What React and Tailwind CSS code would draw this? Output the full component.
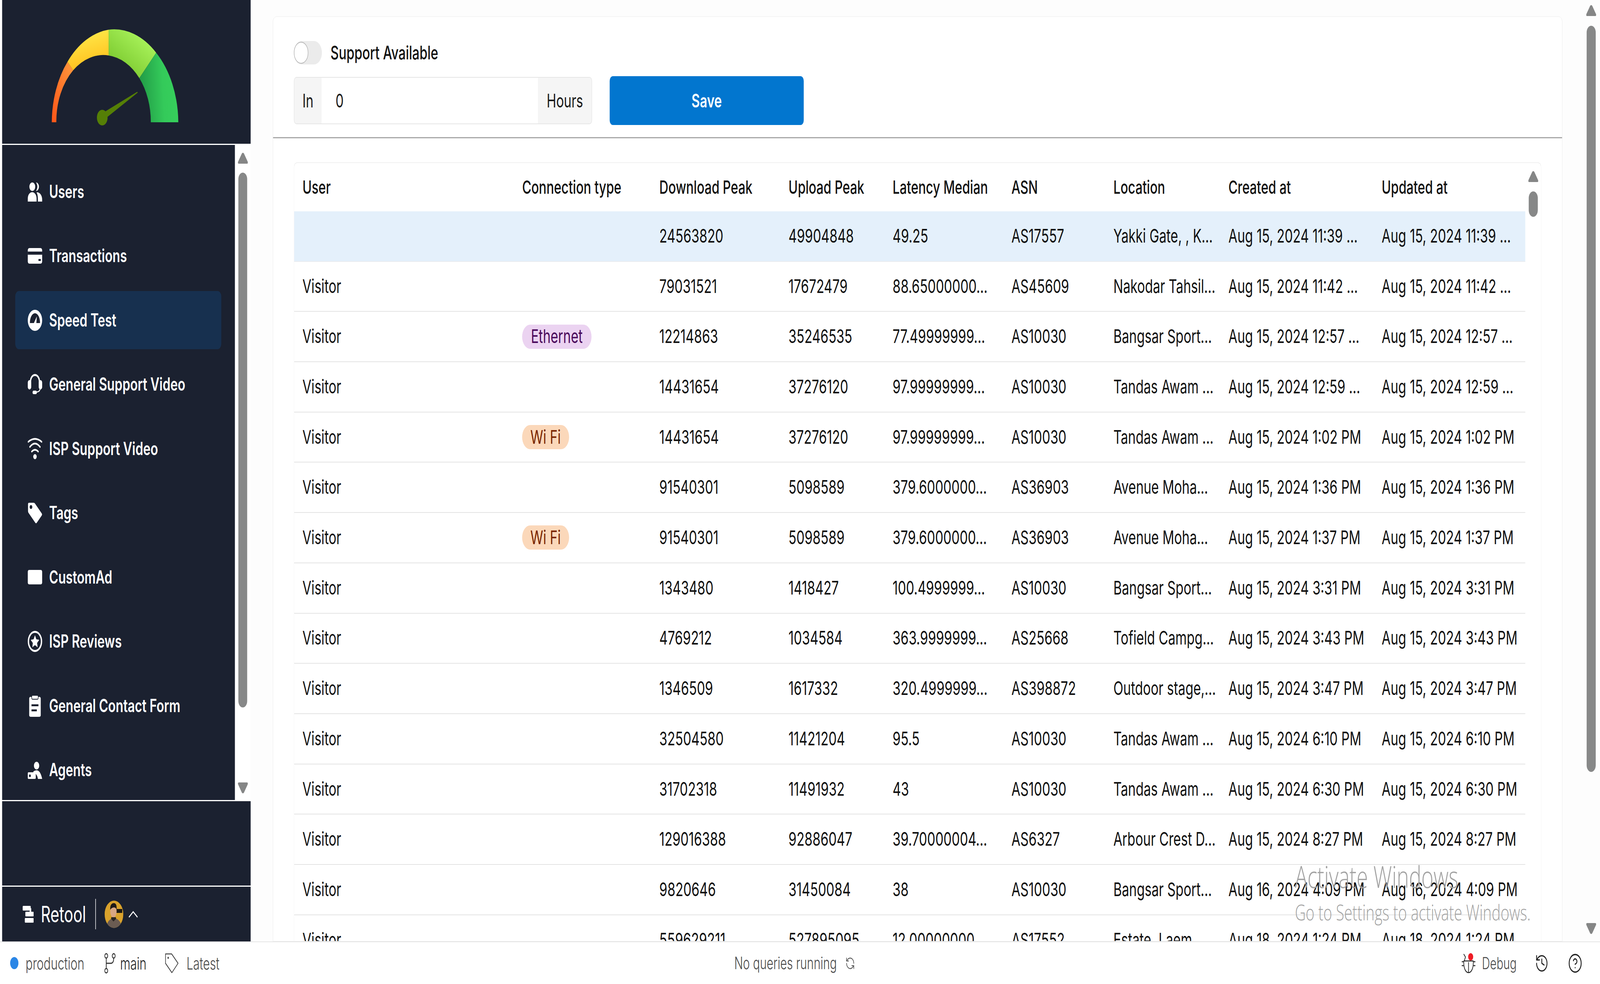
import React from "react";
import { History, CircleHelp, RefreshCcw } from "lucide-react";

const DARK = "#1b2130";

const UsersIcon = () => (
  <svg width="54" height="51" viewBox="0 0 54 51" fill="#fff">
    <circle cx="17" cy="13" r="11" />
    <path d="M0 51V44C0 33 8 27 16.500 27C25 27 33 33 33 44V51Z" />
    <path d="M31 2A11 11 0 0 1 31 24C34 20 36 17 36 13C36 9 34 5 31 2Z" />
    <path d="M36 27C46 28 54 36 54 46V51H38V44C38 37 36 31 33 28Z" />
  </svg>
);
const CardIcon = () => (
  <svg width="54" height="40" viewBox="0 0 54 40">
    <rect width="54" height="40" rx="6" fill="#fff" />
    <rect y="9" width="54" height="8" fill={DARK} />
    <rect x="40" y="28" width="9" height="5" rx="1" fill={DARK} />
  </svg>
);
const GaugeIcon = () => (
  <svg width="54" height="54" viewBox="0 0 54 54">
    <circle cx="27" cy="27" r="27" fill="#fff" />
    <path d="M8 34C8 19 17 9 27 9C37 9 46 19 46 34Z" fill={DARK} />
    <path d="M23 34L34 17L32 36Z" fill="#fff" />
  </svg>
);
const HeadsetIcon = () => (
  <svg width="54" height="54" viewBox="0 0 54 54">
    <path d="M10 22C10 10 18 3 27 3C36 3 44 10 44 22" fill="none" stroke="#fff" strokeWidth="5" />
    <rect x="0" y="16" width="13" height="24" rx="6.500" fill="#fff" />
    <rect x="41" y="16" width="13" height="24" rx="6.500" fill="#fff" />
    <path d="M46 38C46 44 38 47 26 47" fill="none" stroke="#fff" strokeWidth="3" />
    <rect x="18" y="43" width="16" height="9" rx="4.500" fill="#fff" />
  </svg>
);
const WifiIcon = () => (
  <svg width="54" height="55" viewBox="0 0 54 55" fill="none" stroke="#fff" strokeWidth="4.500" strokeLinecap="round">
    <path d="M2 10Q27 -5 52 10" />
    <path d="M8 23Q27 6 46 23" />
    <path d="M15 35Q27 26 39 35" />
    <circle cx="27" cy="48" r="6.500" fill="#fff" stroke="none" />
  </svg>
);
const TagIcon = () => (
  <svg width="54" height="54" viewBox="0 0 54 54">
    <path d="M5 1H22Q25 1 27 3L52 28Q55 31 52 34L34 52Q31 55 28 52L3 27Q1 25 1 22V5Q1 1 5 1Z" fill="#fff" />
    <circle cx="12" cy="12" r="5" fill={DARK} />
  </svg>
);
const AdIcon = () => (
  <svg width="54" height="37" viewBox="0 0 54 37">
    <rect width="54" height="37" rx="5" fill="#fff" />
  </svg>
);
const StarIcon = () => (
  <svg width="54" height="54" viewBox="0 0 54 54">
    <circle cx="27" cy="27" r="24.500" fill="none" stroke="#fff" strokeWidth="5" />
    <path d="M27 11L32 21.500L43 23L35 31L37 42L27 36.500L17 42L19 31L11 23L22 21.500Z" fill="#fff" />
  </svg>
);
const ClipIcon = () => (
  <svg width="44" height="56" viewBox="0 0 44 56">
    <rect y="5" width="44" height="51" rx="5" fill="#fff" />
    <rect x="10" y="1" width="24" height="10" rx="3" fill="#fff" stroke={DARK} strokeWidth="2" />
    <rect x="9" y="24" width="26" height="5" fill={DARK} />
    <rect x="9" y="37" width="20" height="5" fill={DARK} />
  </svg>
);
const AgentIcon = () => (
  <svg width="54" height="45" viewBox="0 0 54 45" fill="#fff">
    <circle cx="33" cy="11" r="10" />
    <path d="M20 27C24 24 29 23 33 23C43 23 50 31 54 45H38C37 38 32 31 20 27Z" />
    <rect x="0" y="28" width="30" height="17" rx="3" />
    <circle cx="8" cy="37" r="3.500" fill={DARK} />
  </svg>
);

const navItems = [
  ["Users", UsersIcon],
  ["Transactions", CardIcon],
  ["Speed Test", GaugeIcon],
  ["General Support Video", HeadsetIcon],
  ["ISP Support Video", WifiIcon],
  ["Tags", TagIcon],
  ["CustomAd", AdIcon],
  ["ISP Reviews", StarIcon],
  ["General Contact Form", ClipIcon],
  ["Agents", AgentIcon],
];

const Arrow = ({ down }) => (
  <svg width="38" height="30" viewBox="0 0 38 30" className={down ? "rotate-180" : ""}>
    <path d="M19 1Q21 1 23 3L37 24Q39 29 34 29H4Q-1 29 1 24L15 3Q17 1 19 1Z" fill="#858686" />
  </svg>
);

const Gauge = () => (
  <svg width="931" height="368" viewBox="8 0 931 368">
    <defs>
      <linearGradient id="go" x1="0" y1="1" x2="1" y2="0">
        <stop offset="0" stopColor="#ff5518" />
        <stop offset="1" stopColor="#ff9a3e" />
      </linearGradient>
      <linearGradient id="gy" x1="0.7" y1="1" x2="0.4" y2="0">
        <stop offset="0" stopColor="#ffbb18" />
        <stop offset="1" stopColor="#ffeb4c" />
      </linearGradient>
      <linearGradient id="gl" x1="0.2" y1="0.9" x2="0.8" y2="0.2">
        <stop offset="0" stopColor="#78c62c" />
        <stop offset="1" stopColor="#a8f25a" />
      </linearGradient>
      <linearGradient id="gd" x1="0" y1="0.5" x2="1" y2="0.4">
        <stop offset="0" stopColor="#219a46" />
        <stop offset="0.6" stopColor="#34ca5a" />
        <stop offset="1" stopColor="#37d05c" />
      </linearGradient>
    </defs>
    <path d="M194 313A237 238 0 0 1 253 158L274 180A177 171 0 0 0 211 313Z" fill="url(#go)" />
    <path d="M253 158A237 238 0 0 1 407 76L407 142A177 171 0 0 0 274 180Z" fill="url(#gy)" />
    <path d="M407 76A237 238 0 0 1 585 135L522 200A177 171 0 0 0 407 142Z" fill="url(#gl)" />
    <path d="M585 135A237 238 0 0 1 668 313H565A177 171 0 0 0 522 200Z" fill="url(#gd)" />
    <circle cx="383" cy="301" r="20" fill="#557f06" />
    <path d="M395 285L514 235L516 237L403 299Z" fill="#557f06" />
  </svg>
);

const RetoolLogo = () => (
  <svg width="41" height="43" viewBox="0 0 41 43" fill="#fff">
    <rect x="0" y="0" width="30" height="12" rx="2" />
    <rect x="10" y="15" width="31" height="12" rx="2" />
    <rect x="8" y="31" width="33" height="12" rx="2" />
    <rect x="26" y="6" width="6" height="10" />
  </svg>
);

const Avatar = () => (
  <svg width="70" height="71" viewBox="0 0 70 71">
    <defs>
      <clipPath id="av">
        <circle cx="35" cy="35.500" r="35" />
      </clipPath>
    </defs>
    <g clipPath="url(#av)">
      <rect width="70" height="71" fill="#d9a22c" />
      <rect x="42" y="22" width="24" height="10" fill="#1d1a14" />
      <path d="M6 71C8 54 20 46 35 46C50 46 62 54 64 71Z" fill="#6b5c52" />
      <ellipse cx="33" cy="28" rx="12" ry="16" fill="#d9a783" />
      <path d="M21 24C20 10 28 7 35 7C42 7 46 12 45 24C42 16 28 16 21 24Z" fill="#1f1a18" />
      <path d="M24 47L33 54L43 47L42 43H25Z" fill="#2a2522" />
    </g>
  </svg>
);

const BugIcon = () => (
  <div className="relative w-[51px] h-[51px]">
    <svg width="51" height="51" viewBox="0 0 51 51" fill="none" stroke="#222" strokeWidth="2.500" strokeLinecap="round">
      <path d="M8 20H43C45 38 36 50 25.500 50C15 50 6 38 8 20Z" />
      <path d="M25.500 24V50" />
      <path d="M8 3L14 10L10 19" />
      <path d="M1 22H6M1 32H6M45 22H50M45 32H50" />
    </svg>
    <div className="absolute right-[8px] top-0 w-[19px] h-[19px] rounded-full bg-[#ee1c25]" />
  </div>
);

const BranchIcon = () => (
  <svg width="42" height="52" viewBox="0 0 42 52" fill="none" stroke="#333" strokeWidth="2.800">
    <circle cx="7" cy="7" r="5.500" />
    <circle cx="7" cy="45" r="5.500" />
    <circle cx="35" cy="7" r="5.500" />
    <path d="M7 12.500V39.500" />
    <path d="M35 12.500C35 22 31 26 24 26H7" />
  </svg>
);

const LatestIcon = () => (
  <svg width="51" height="52" viewBox="0 0 51 52" fill="none" stroke="#444" strokeWidth="2.500" strokeLinejoin="round">
    <path d="M2 2H25L49 26L26 50L2 26Z" />
    <circle cx="12" cy="12" r="1.500" fill="#444" />
  </svg>
);

const rows = [
  ["", "", "24563820", "49904848", "49.25", "AS17557", "Yakki Gate, , K...", "Aug 15, 2024 11:39 ...", "Aug 15, 2024 11:39 ..."],
  ["Visitor", "", "79031521", "17672479", "88.65000000...", "AS45609", "Nakodar Tahsil...", "Aug 15, 2024 11:42 ...", "Aug 15, 2024 11:42 ..."],
  ["Visitor", "Ethernet", "12214863", "35246535", "77.49999999...", "AS10030", "Bangsar Sport...", "Aug 15, 2024 12:57 ...", "Aug 15, 2024 12:57 ..."],
  ["Visitor", "", "14431654", "37276120", "97.99999999...", "AS10030", "Tandas Awam ...", "Aug 15, 2024 12:59 ...", "Aug 15, 2024 12:59 ..."],
  ["Visitor", "Wi Fi", "14431654", "37276120", "97.99999999...", "AS10030", "Tandas Awam ...", "Aug 15, 2024 1:02 PM", "Aug 15, 2024 1:02 PM"],
  ["Visitor", "", "91540301", "5098589", "379.6000000...", "AS36903", "Avenue Moha...", "Aug 15, 2024 1:36 PM", "Aug 15, 2024 1:36 PM"],
  ["Visitor", "Wi Fi", "91540301", "5098589", "379.6000000...", "AS36903", "Avenue Moha...", "Aug 15, 2024 1:37 PM", "Aug 15, 2024 1:37 PM"],
  ["Visitor", "", "1343480", "1418427", "100.4999999...", "AS10030", "Bangsar Sport...", "Aug 15, 2024 3:31 PM", "Aug 15, 2024 3:31 PM"],
  ["Visitor", "", "4769212", "1034584", "363.9999999...", "AS25668", "Tofield Campg...", "Aug 15, 2024 3:43 PM", "Aug 15, 2024 3:43 PM"],
  ["Visitor", "", "1346509", "1617332", "320.4999999...", "AS398872", "Outdoor stage,...", "Aug 15, 2024 3:47 PM", "Aug 15, 2024 3:47 PM"],
  ["Visitor", "", "32504580", "11421204", "95.5", "AS10030", "Tandas Awam ...", "Aug 15, 2024 6:10 PM", "Aug 15, 2024 6:10 PM"],
  ["Visitor", "", "31702318", "11491932", "43", "AS10030", "Tandas Awam ...", "Aug 15, 2024 6:30 PM", "Aug 15, 2024 6:30 PM"],
  ["Visitor", "", "129016388", "92886047", "39.70000004...", "AS6327", "Arbour Crest D...", "Aug 15, 2024 8:27 PM", "Aug 15, 2024 8:27 PM"],
  ["Visitor", "", "9820646", "31450084", "38", "AS10030", "Bangsar Sport...", "Aug 16, 2024 4:09 PM", "Aug 16, 2024 4:09 PM"],
  ["Visitor", "", "559629211", "527895095", "12.00000000...", "AS17552", "Estate, Laem...", "Aug 18, 2024 1:24 PM", "Aug 18, 2024 1:24 PM"],
];

const headers = ["User", "Connection type", "Download Peak", "Upload Peak", "Latency Median", "ASN", "Location", "Created at", "Updated at"];
const gridCols = "grid grid-cols-[823px_514px_484px_390px_445px_382px_431px_574px_569px]";

const Pill = ({ text }) => (
  <span
    className={
      text === "Ethernet"
        ? "inline-flex items-center h-[62px] px-[33px] rounded-full bg-[#ebd3f1] text-[#4b0a5c]"
        : "inline-flex items-center h-[62px] px-[31px] rounded-full bg-[#fbd8ba] text-[#7a2600]"
    }
  >
    {text}
  </span>
);

export default function App() {
  // The window may be narrower than the design width: fit the 5994px design to it.
  const fit = window.innerWidth / 5994;
  return (
    <div className="w-screen h-screen overflow-hidden bg-[#fdfdfd]">
      <div
        className="w-[5994px] h-[2519px] flex flex-col overflow-hidden bg-[#fdfdfd] [font-family:Inter,sans-serif] relative origin-top-left"
        style={{ transform: `scaleX(${fit})` }}
      >
        <div className="h-[2410px] flex">
          {/* sidebar */}
          <aside className="ml-[8px] w-[931px] h-full flex flex-col shrink-0 bg-white">
            <div className="h-[368px] bg-[#1b2130]">
              <Gauge />
            </div>
            <div className="h-[1680px] pt-[3px] flex">
              <nav className="w-[872px] bg-[#1b2130] pt-[45px] pl-[49px] flex flex-col gap-[15.500px] overflow-hidden">
                {navItems.map(([label, Icon]) => (
                  <div
                    key={label}
                    className={
                      label === "Speed Test"
                        ? "w-[772px] h-[149px] shrink-0 rounded-[14px] bg-[#17304f] flex items-center pl-[47px] gap-[26px] text-white text-[46.500px] font-semibold"
                        : "w-[772px] h-[149px] shrink-0 rounded-[14px] flex items-center pl-[47px] gap-[26px] text-white text-[46.500px] font-semibold"
                    }
                  >
                    <span className="w-[54px] flex justify-center">
                      <Icon />
                    </span>
                    <span>{label}</span>
                  </div>
                ))}
              </nav>
              <div className="w-[59px] flex flex-col items-center pt-[19px] pb-[16px]">
                <Arrow />
                <div className="w-[33px] h-[1369px] mt-[22px] rounded-full bg-[#878888]" />
                <div className="mt-auto">
                  <Arrow down />
                </div>
              </div>
            </div>
            <div className="h-[3px] bg-white" />
            <div className="h-[216px] bg-[#1b2130]" />
            <div className="h-[3px] bg-white" />
            <div className="h-[140px] bg-[#1b2130] flex items-center pl-[77px] text-white">
              <RetoolLogo />
              <span className="ml-[27px] w-[169px] text-[57px] leading-none whitespace-nowrap">Retool</span>
              <div className="ml-[35px] w-[2px] h-[78px] bg-white" />
              <div className="ml-[33px]">
                <Avatar />
              </div>
              <svg width="36" height="19" viewBox="0 0 36 19" fill="none" stroke="#fff" strokeWidth="3" className="ml-[19px]">
                <path d="M2 17L18 3L34 17" />
              </svg>
            </div>
          </aside>

          {/* main */}
          <main className="flex-1 flex min-w-0">
            <div className="flex-1 pl-[83px] pt-[42px] min-w-0 overflow-hidden">
              <div className="w-[4831px] h-full bg-white border border-[#e9e9e9] rounded-t-[14px] overflow-hidden">
                <div className="h-[311px] pl-[78px] pt-[62px] border-b-[3px] border-[#a8a8a8]">
                  <div className="flex items-center h-[60px]">
                    <div className="w-[105px] h-[60px] rounded-full bg-[#ebebeb] flex items-center">
                      <div className="w-[54px] h-[56px] rounded-full bg-white border-2 border-[#b5b5b5]" />
                    </div>
                    <span className="ml-[32px] text-[48px] font-medium text-[#111]">Support Available</span>
                  </div>
                  <div className="flex items-center mt-[30px] h-[125px]">
                    <div className="w-[1117px] h-[121px] rounded-[10px] border-2 border-[#e6e6e6] flex overflow-hidden text-[48px] text-[#1a1a1a]">
                      <div className="w-[102px] bg-[#f5f5f5] flex items-center pl-[30px]">In</div>
                      <div className="flex-1 bg-white flex items-center pl-[52px]">0</div>
                      <div className="w-[201px] bg-[#f5f5f5] flex items-center pl-[33px]">Hours</div>
                    </div>
                    <button className="ml-[66px] w-[727px] h-[125px] rounded-[12px] bg-[#0276cf] text-white text-[48px] font-semibold">
                      Save
                    </button>
                  </div>
                </div>

                <div className="pl-[78px] pt-[62px]">
                  <div className="w-[4673px] h-[2000px] flex border-t border-x border-[#e4e4e4] rounded-t-[12px] overflow-hidden">
                    <div className="w-[4612px] shrink-0">
                      <div className={gridCols + " h-[124px] items-center text-[47px] font-medium text-[#111]"}>
                        {headers.map((h) => (
                          <div key={h} className="pl-[31px]">
                            {h}
                          </div>
                        ))}
                      </div>
                      {rows.map((row, i) => (
                        <div
                          key={i}
                          className={
                            gridCols +
                            (i === 0
                              ? " h-[128.700px] items-center text-[48.500px] text-[#111] bg-[#e4f0fb] border-b border-[#e4e4e4]"
                              : " h-[128.700px] items-center text-[48.500px] text-[#111] border-b-2 border-[#e4e4e4]")
                          }
                        >
                          {row.map((c, j) => (
                            <div key={j} className="pl-[31px] whitespace-nowrap overflow-hidden">
                              {j === 1 && c ? <Pill text={c} /> : c}
                            </div>
                          ))}
                        </div>
                      ))}
                    </div>
                    <div className="flex-1 flex flex-col items-center pt-[20px]">
                      <Arrow />
                      <div className="w-[34px] h-[65px] mt-[23px] rounded-full bg-[#878888]" />
                    </div>
                  </div>
                </div>
              </div>
            </div>
            <div className="w-[66px] shrink-0 flex flex-col items-center pt-[12px] pb-[18px]">
              <Arrow />
              <div className="w-[34px] h-[1910px] mt-[24px] rounded-full bg-[#878888]" />
              <div className="mt-auto">
                <Arrow down />
              </div>
            </div>
          </main>
        </div>

        {/* status bar */}
        <footer className="h-[109px] bg-white border-t-2 border-[#e6e6e6] flex items-center text-[44px] text-[#4a4a4a] font-light whitespace-nowrap">
          <div className="ml-[38px] w-[31px] h-[31px] rounded-full bg-[#2b86e6]" />
          <span className="ml-[27px]">production</span>
          <span className="ml-[75px]">
            <BranchIcon />
          </span>
          <span className="ml-[17px] text-[#222]">main</span>
          <span className="ml-[69px]">
            <LatestIcon />
          </span>
          <span className="ml-[30px]">Latest</span>
          <span className="ml-[1929px] w-[383px] text-[43px]">No queries running</span>
          <RefreshCcw size={36} strokeWidth={1.5} className="ml-[33px] text-[#555]" />
          <span className="ml-[2273px]">
            <BugIcon />
          </span>
          <span className="ml-[25px] text-[42px]">Debug</span>
          <History size={52} strokeWidth={1.5} className="ml-[68px] text-[#222]" />
          <CircleHelp size={54} strokeWidth={1.5} className="ml-[72px] text-[#222]" />
        </footer>

        {/* Windows activation watermark */}
        <div className="absolute left-[4851px] top-[2198px] pointer-events-none text-[#a2a2a2] [font-family:'Open_Sans',sans-serif] font-light">
          <div className="text-[78px] leading-[90px]">Activate Windows</div>
          <div className="text-[56px] leading-[64px] mt-[14px] whitespace-nowrap">Go to Settings to activate Windows.</div>
        </div>
      </div>
    </div>
  );
}
